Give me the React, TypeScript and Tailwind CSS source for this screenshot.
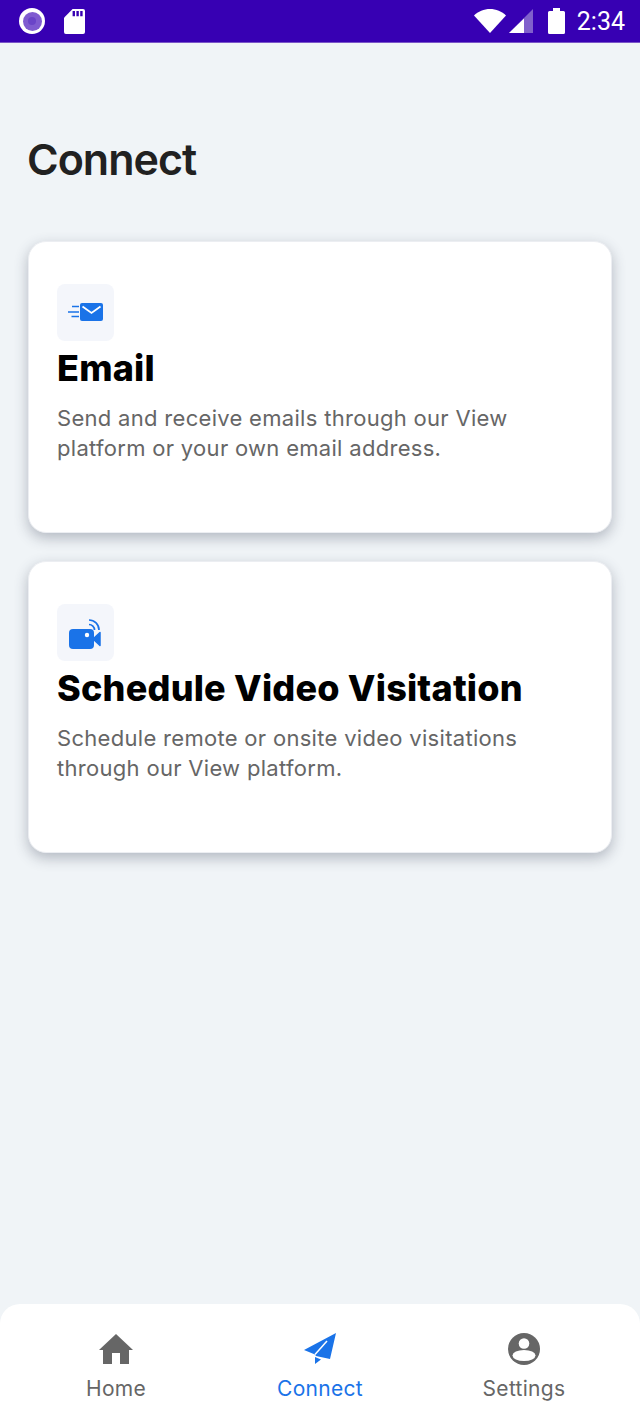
const font = { fontFamily: "Inter, 'Noto Sans', sans-serif" };

function SdCard() {
    return (
        <svg width="21" height="25" viewBox="0 0 22 26">
            <path fill="#fff" d="M9 0h11a2 2 0 0 1 2 2v22a2 2 0 0 1-2 2H2a2 2 0 0 1-2-2V9z" />
            <rect x="9" y="2" width="2.500" height="5.500" fill="#3700b3" />
            <rect x="13" y="2" width="2.500" height="5.500" fill="#3700b3" />
            <rect x="17" y="2" width="2.500" height="5.500" fill="#3700b3" />
        </svg>
    );
}

function StatusBar() {
    return (
        <div className="h-[43px] bg-[#3700b3] flex items-center justify-between pl-[19px] pr-[15px] border-b border-[#7a55c8]">
            <div className="flex items-center gap-[19px]">
                <div className="w-[26px] h-[26px] rounded-full bg-white flex items-center justify-center">
                    <div className="w-[19px] h-[19px] rounded-full bg-[#7f5bd0] flex items-center justify-center">
                        <div className="w-[8px] h-[8px] rounded-full bg-[#6a44c8]" />
                    </div>
                </div>
                <SdCard />
            </div>
            <div className="flex items-center">
                <svg width="32" height="24" viewBox="0 0 32 24" className="mr-[3px]">
                    <path fill="#fff" d="M0 6.500C4 2.500 10 0 16 0s12 2.500 16 6.500L16 24z" />
                </svg>
                <svg width="24" height="24" viewBox="0 0 24 24" className="mr-[15px]">
                    <path fill="#8060cc" d="M24 0v24H0z" />
                    <path fill="#fff" d="M15 9.500V24H0z" />
                </svg>
                <svg width="17" height="26" viewBox="0 0 17 26" className="mr-[12px]">
                    <path fill="#fff" d="M5 0h7v3h3.500a1.500 1.500 0 0 1 1.500 1.500v20a1.500 1.500 0 0 1-1.500 1.500h-14A1.500 1.500 0 0 1 0 24.500v-20A1.500 1.500 0 0 1 1.500 3H5z" />
                </svg>
                <span className="text-white text-[25px] leading-none" style={{ fontFamily: "Roboto, sans-serif" }}>2:34</span>
            </div>
        </div>
    );
}

function MailIcon() {
    return (
        <svg width="36" height="19" viewBox="0 0 36 19">
            <rect x="12" y="0" width="23" height="18" rx="2" fill="#1a73e8" />
            <path d="M14.500 3.500l9 6.500 9-6.500" fill="none" stroke="#fff" strokeWidth="1.800" />
            <path d="M4 3.500h7M0 9h11M3.500 13.500h7.500" stroke="#1a73e8" strokeWidth="1.500" />
        </svg>
    );
}

function VideoIcon() {
    return (
        <svg width="33" height="31" viewBox="0 0 33 31" className="mt-[3px]">
            <rect x="0" y="10" width="25" height="20" rx="4" fill="#1a73e8" />
            <path d="M24 20l7-6.500v13z" fill="#1a73e8" stroke="#1a73e8" strokeWidth="1.500" strokeLinejoin="round" />
            <circle cx="18" cy="16" r="2.200" fill="#fff" />
            <path d="M20 5.500a5.500 5.500 0 0 1 5.500 5.500M20 1a10 10 0 0 1 10 10" fill="none" stroke="#1a73e8" strokeWidth="1.700" />
        </svg>
    );
}

function Card({ icon, title, text }: { icon: React.ReactNode, title: string, text: string[] }) {
    return (
        <div className="h-[292px] bg-white rounded-[18px] pt-[42px] pl-[28px] border border-[#eceef2] shadow-[0_5px_14px_rgba(50,60,80,0.32)]">
            <div className="w-[57px] h-[57px] rounded-[8px] bg-[#f4f6fb] flex items-center justify-center">
                {icon}
            </div>
            <h2 className="text-[36px] leading-[52px] font-extrabold text-black mt-[1px] tracking-[0.2px]" style={font}>{title}</h2>
            <p className="text-[22px] leading-[30px] text-[#666666] mt-[9px] tracking-[0.3px]" style={font}>
                {text.map(t => <span key={t} className="block whitespace-nowrap">{t}</span>)}
            </p>
        </div>
    );
}

function NavItem({ icon, label, active }: { icon: React.ReactNode, label: string, active?: boolean }) {
    return (
        <div className="flex-1 flex flex-col items-center">
            <div className="h-[33px] flex items-center justify-center">{icon}</div>
            <span className={"text-[21px] leading-[30px] mt-[9px] tracking-[0.3px] " + (active ? "text-[#1a73e8]" : "text-[#666666]")} style={font}>{label}</span>
        </div>
    );
}

export default function App() {
    return (
        <div className="w-[640px] h-[1422px] bg-[#f0f4f7] flex flex-col overflow-hidden">
            <StatusBar />

            <h1 className="text-[43px] leading-[48px] font-semibold text-[#212121] pl-[27px] mt-[92px] tracking-[-1px]" style={font}>Connect</h1>

            <div className="flex flex-col gap-[28px] px-[28px] mt-[58px]">
                <Card
                    icon={<MailIcon />}
                    title="Email"
                    text={["Send and receive emails through our View", "platform or your own email address."]}
                />
                <Card
                    icon={<VideoIcon />}
                    title="Schedule Video Visitation"
                    text={["Schedule remote or onsite video visitations", "through our View platform."]}
                />
            </div>

            {/* Bottom nav */}
            <div className="mt-auto h-[118px] bg-white rounded-t-[20px] flex pt-[28px] px-[14px]">
                <NavItem
                    label="Home"
                    icon={
                        <svg width="34" height="30" viewBox="0 0 34 30">
                            <path fill="#666666" d="M17 0L34 16h-4v14H21V19h-8v11H4V16H0z" />
                        </svg>
                    }
                />
                <NavItem
                    active
                    label="Connect"
                    icon={
                        <svg width="32" height="31" viewBox="0 0 32 31">
                            <path fill="#1a73e8" d="M32 0L0 17l11 4.500L12 23l14 3z" />
                            <path d="M23 8L11 21.500" stroke="#fff" strokeWidth="1.500" />
                            <path fill="#1a73e8" d="M11 24l0 7 6-4.500z" />
                        </svg>
                    }
                />
                <NavItem
                    label="Settings"
                    icon={
                        <svg width="32" height="32" viewBox="0 0 32 32">
                            <circle cx="16" cy="16" r="16" fill="#666666" />
                            <circle cx="16" cy="10.500" r="5.300" fill="#fff" />
                            <ellipse cx="16" cy="22.500" rx="11.500" ry="5.500" fill="#fff" />
                        </svg>
                    }
                />
            </div>
        </div>
    );
}
